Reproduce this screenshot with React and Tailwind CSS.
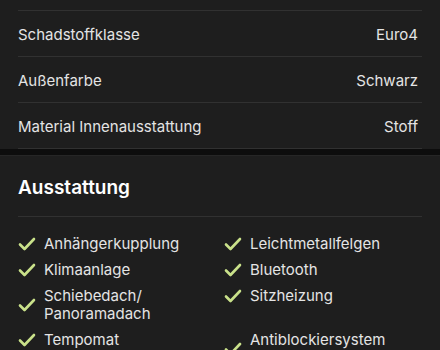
const details = [
  ['Schadstoffklasse', 'Euro4'],
  ['Außenfarbe', 'Schwarz'],
  ['Material Innenausstattung', 'Stoff'],
];

const features = [
  'Anhängerkupplung',
  'Leichtmetallfelgen',
  'Klimaanlage',
  'Bluetooth',
  'Schiebedach/ Panoramadach',
  'Sitzheizung',
  'Tempomat',
  'Antiblockiersystem (ABS)',
];

function Tick() {
  return (
    <svg width="18" height="14" viewBox="0 0 18 14" className="shrink-0" fill="none">
      <path d="M2 7.5 L6.5 12 L16 2" stroke="#c9e18a" strokeWidth="2.6" strokeLinecap="round" strokeLinejoin="round" />
    </svg>
  );
}

export default function App() {
  return (
    <div className="w-[440px] h-[350px] overflow-hidden bg-[#0d0d0d] font-['Inter',sans-serif]">
      <div className="bg-[#1e1e1e] px-[18px] pt-[10px]">
        {details.map(([label, value]) => (
          <div key={label} className="flex h-[46px] items-center justify-between border-t border-[#313131] pt-[3px] pr-[4px] text-[15px] text-[#e4e4e4]">
            <span>{label}</span>
            <span>{value}</span>
          </div>
        ))}
        <div className="border-t border-[#313131]" />
      </div>
      <div className="mt-[6px] border-t border-[#262626] bg-[#1e1e1e] px-[18px] pt-[19px]">
        <h2 className="pb-[15px] text-[19px] font-semibold leading-[26px] text-white">Ausstattung</h2>
        <div className="border-t border-[#313131]" />
        <div className="grid grid-cols-2 items-start gap-x-2 gap-y-2 pt-[18px]">
          {features.map((f) => (
            <div key={f} className="flex items-center gap-[8px]">
              <Tick />
              <span className="text-[15px] leading-[18px] text-[#e4e4e4]">{f}</span>
            </div>
          ))}
        </div>
      </div>
    </div>
  );
}
